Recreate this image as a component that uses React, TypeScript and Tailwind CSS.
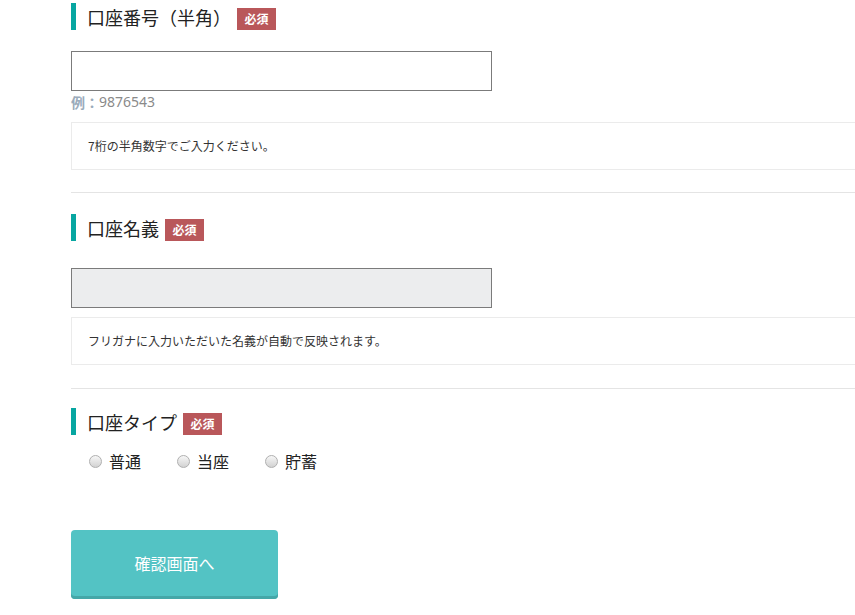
import React from "react";

const jp = "font-['Noto_Sans_CJK_JP','Noto_Sans',sans-serif]";

const Badge = () => (
  <span className="ml-[6px] flex h-[22px] w-[39px] items-center justify-center bg-[#b9575a] text-[12px] font-bold leading-none text-white">
    必須
  </span>
);

const Heading = ({ title, className = "" }: { title: string; className?: string }) => (
  <div className={`flex items-end ${className}`}>
    <div className="flex h-[27px] items-center border-l-[5px] border-[#07a6a1] pl-[11px]">
      <span className="text-[18px] leading-none text-[#222]">{title}</span>
    </div>
    <Badge />
  </div>
);

const Note = ({ text }: { text: string }) => (
  <div className="flex h-[48px] items-center border border-[#ebebeb] pl-[16px] text-[12px] text-[#333]">
    {text}
  </div>
);

const Radio = ({ label }: { label: string }) => (
  <label className="flex items-center gap-[7px]">
    <span className="h-[13px] w-[13px] rounded-full border border-[#b0b0b0] bg-linear-to-b from-[#f7f7f7] to-[#d2d2d2]" />
    <span className="text-[16px] leading-none text-[#222]">{label}</span>
  </label>
);

export default function App() {
  return (
    <div className={`h-[615px] w-[855px] overflow-hidden bg-white ${jp}`}>
      <div className="ml-[71px] w-[820px]">
        {/* 口座番号 */}
        <Heading title="口座番号（半角）" className="mt-[3px]" />
        <div className="mt-[21px] h-[40px] w-[421px] border border-[#7b7b7b] bg-white" />
        <div className="mt-[4px] flex h-[14px] items-center text-[14px] leading-none">
          <span className="font-bold text-[#9aabbb]">例：</span>
          <span className="font-['Noto_Sans',sans-serif] text-[#8a8a8a]">9876543</span>
        </div>
        <div className="mt-[13px]">
          <Note text="7桁の半角数字でご入力ください。" />
        </div>
        <div className="mt-[22px] h-[1px] bg-[#e4e4e4]" />

        {/* 口座名義 */}
        <Heading title="口座名義" className="mt-[21px]" />
        <div className="mt-[27px] h-[40px] w-[421px] border border-[#7b7b7b] bg-[#ecedee]" />
        <div className="mt-[9px]">
          <Note text="フリガナに入力いただいた名義が自動で反映されます。" />
        </div>
        <div className="mt-[23px] h-[1px] bg-[#e4e4e4]" />

        {/* 口座タイプ */}
        <Heading title="口座タイプ" className="mt-[19px]" />
        <div className="mt-[18px] flex gap-[36px] pl-[18px]">
          <Radio label="普通" />
          <Radio label="当座" />
          <Radio label="貯蓄" />
        </div>

        <button className="mt-[61px] flex h-[69px] w-[207px] items-center justify-center rounded-[4px] bg-[#53c3c4] pb-[3px] text-[16px] font-normal text-white shadow-[inset_0_-3px_0_#45a7a8]">
          確認画面へ
        </button>
      </div>
    </div>
  );
}
